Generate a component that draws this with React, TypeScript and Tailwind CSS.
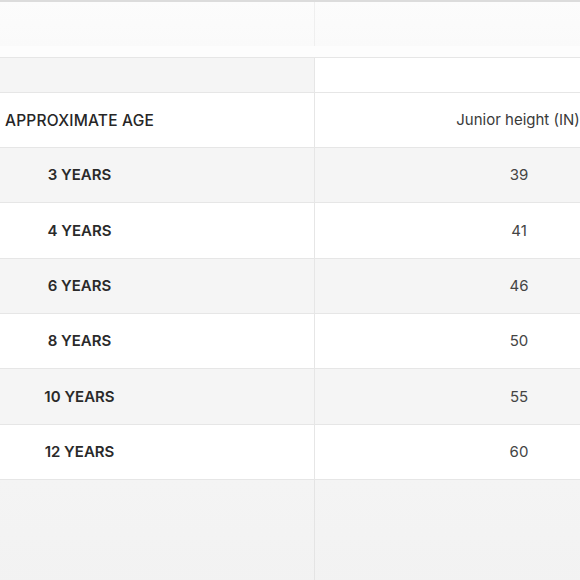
const rows = [
  { age: '3 YEARS', height: '39', h: 'h-[55px]' },
  { age: '4 YEARS', height: '41', h: 'h-[56px]' },
  { age: '6 YEARS', height: '46', h: 'h-[55px]' },
  { age: '8 YEARS', height: '50', h: 'h-[55px]' },
  { age: '10 YEARS', height: '55', h: 'h-[56px]' },
  { age: '12 YEARS', height: '60', h: 'h-[55px]' },
]

export default function App() {
  return (
    <div
      className="w-[580px] h-[580px] overflow-hidden bg-[#f4f4f4] text-[#262626]"
      style={{ fontFamily: 'Inter, "Noto Sans", sans-serif' }}
    >
      <div className="-ml-[155px] w-[878px]">
        {/* faded top band */}
        <div className="flex h-[46px] border-t-2 border-[#dcdcdc] bg-gradient-to-b from-[#fcfcfc] to-[#fafafa]">
          <div className="w-[470px] border-r border-[#efefef]" />
          <div className="flex-1" />
        </div>
        <div className="flex h-[11px] bg-[#fdfdfd]">
          <div className="w-[470px]" />
          <div className="flex-1" />
        </div>

        {/* empty row */}
        <div className="flex h-[36px] border-y border-[#e6e6e6]">
          <div className="w-[470px] bg-[#f5f5f5] border-r border-[#e6e6e6]" />
          <div className="flex-1 bg-white" />
        </div>

        {/* header */}
        <div className="flex h-[55px] bg-white border-b border-[#e6e6e6] text-[15.5px]">
          <div className="w-[470px] border-r border-[#e6e6e6] flex items-center justify-center pt-[1px] font-medium tracking-[0.2px]">
            APPROXIMATE AGE
          </div>
          <div className="w-[406px] flex items-center justify-center pt-[1px] text-[15px] text-[#3a3a3a]">
            Junior height (IN)
          </div>
        </div>

        {rows.map((r, i) => (
          <div
            key={r.age}
            className={`flex ${r.h} border-b border-[#e6e6e6] text-[15px] ${i % 2 === 0 ? 'bg-[#f5f5f5]' : 'bg-white'}`}
          >
            <div className="w-[470px] border-r border-[#e6e6e6] flex items-center justify-center pt-[1px] font-semibold text-[#2a2a2a]">
              {r.age}
            </div>
            <div className="flex-1 flex items-center justify-center pt-[1px] text-[#444]">
              {r.height}
            </div>
          </div>
        ))}

        {/* faded bottom area */}
        <div className="flex h-[110px] bg-gradient-to-b from-[#f4f4f4] to-[#f2f2f2]">
          <div className="w-[470px] border-r border-[#e4e4e4]" />
          <div className="flex-1" />
        </div>
      </div>
    </div>
  )
}
